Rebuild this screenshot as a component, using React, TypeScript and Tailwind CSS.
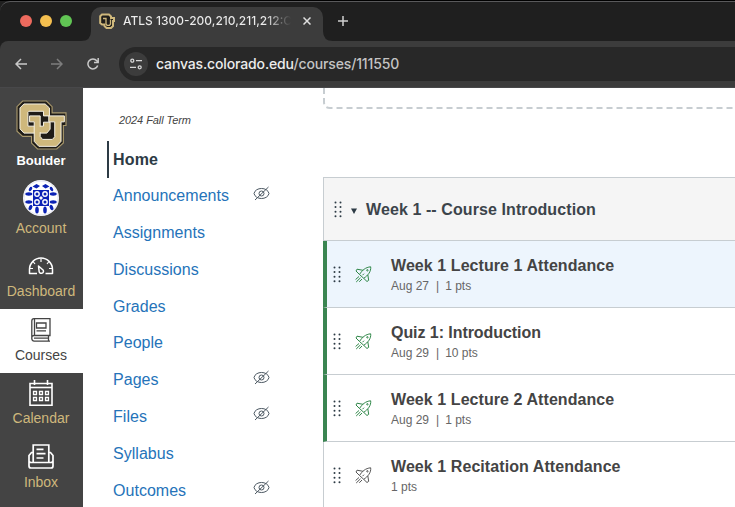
import React from 'react';

const sans = "font-['Liberation_Sans',Arial,sans-serif]";

function CuLogo({ className }: { className: string }) {
  return (
    <svg className={className} viewBox="46 40 154 151" fill="none">
      <path
        d="M66 43H138L155 60V79H197V117H189V170L169 188H111L93 170V150H66L49 134V60Z"
        fill="#1f1c18"
        stroke="#a8986c"
        strokeWidth="3.500"
      />
      <g fill="#cfb87c" stroke="#f7f3e6" strokeWidth="3">
        <path d="M70 52H134L147 64V88H129V74H85L82 77V119H129V107H149V128L139 140H70L58 127V64Z" />
        <path d="M87 88H119V150L126 159H156L163 151V106H145V88H192V106H182V165L168 180H115L101 165V106H87Z" />
      </g>
      <path d="M104 121V137H122V121Z" fill="#cfb87c" />
    </svg>
  );
}

function Avatar() {
  return (
    <svg className="block size-9" viewBox="0 0 36 36">
      <circle cx="18" cy="18" r="18" fill="#fff" />
      <circle cx="18" cy="18" r="17" fill="none" stroke="#c9cdea" strokeWidth=".5" />
      <g fill="#0b22b5">
        <path d="M10 10H26V26H10Z" />
        <path d="M9.500 6.500L13.500 4L17 6L13.500 8.500Z M19 6L22.500 4L26.500 6.500L22.500 8.500Z" />
        {[14, 22].map((v) => (
          <g key={v}>
            <ellipse cx={v} cy="30" rx="1.800" ry="3.500" />
            <ellipse cx="5.800" cy={v} rx="3.500" ry="1.700" />
            <ellipse cx="30.200" cy={v} rx="3.500" ry="1.700" />
          </g>
        ))}
        <ellipse cx="7.500" cy="27.500" rx="1.700" ry="2.800" transform="rotate(25 7.500 27.500)" />
        <ellipse cx="28.500" cy="27.500" rx="1.700" ry="2.800" transform="rotate(-25 28.500 27.500)" />
        <ellipse cx="7.500" cy="9" rx="1.500" ry="2.300" transform="rotate(35 7.500 9)" />
        <ellipse cx="28.500" cy="9" rx="1.500" ry="2.300" transform="rotate(-35 28.500 9)" />
      </g>
      <g fill="#0b22b5" stroke="#fff" strokeWidth="1.400">
        <circle cx="14" cy="14" r="2.200" />
        <circle cx="22" cy="14" r="2.200" />
        <circle cx="14" cy="22" r="2.200" />
        <circle cx="22" cy="22" r="2.200" />
      </g>
      <path d="M18 16L20 18L18 20L16 18Z" fill="#fff" />
    </svg>
  );
}

function DashboardIcon() {
  return (
    <svg className="block h-[18px] w-[26px]" viewBox="0 0 26 18" fill="none" stroke="#fff" strokeWidth="1.500">
      <path d="M9 16.500H1.500V12.500A11.500 11.500 0 0 1 24.500 12.500V16.500H17.500" strokeLinejoin="round" />
      <path d="M13 1.500V5M5 4.500L7 7M21 4.500L19 7M2 11.500H5M21 11.500H24" strokeWidth="1.200" />
      <path d="M10.500 9L15.300 13.200A2.200 2.200 0 1 1 11.200 15Z" strokeLinejoin="round" />
    </svg>
  );
}

function CoursesIcon() {
  return (
    <svg className="block h-6 w-5" viewBox="0 0 20 24" fill="none" stroke="#444" strokeWidth="1.300">
      <path d="M.8 21V3Q.8.700 3 .700H19V17.500H3.200Q.8 17.500.8 20.300T3.200 23.200H19" />
      <path d="M3.500 1V17.500M5.500 5H15V10H5.500ZM5.500 12.800H15M3 20.200H17.500M17.500 17.500V23" />
    </svg>
  );
}

function CalendarIcon() {
  return (
    <svg className="block h-[26px] w-6" viewBox="0 0 24 26" fill="none" stroke="#fff" strokeWidth="1.600">
      <path d="M1 3.500H23V25.200H1ZM5.500 0V5M18.500 0V5" />
      <path d="M1 7.500H23" strokeWidth="1.600" />
      <path d="M4.500 11.500H7.500V14.500H4.500ZM10.500 11.500H13.500V14.500H10.500ZM16.500 11.500H19.500V14.500H16.500ZM4.500 17.500H7.500V20.500H4.500ZM10.500 17.500H13.500V20.500H10.500ZM16.500 17.500H19.500V20.500H16.500Z" strokeWidth="1.300" />
    </svg>
  );
}

function InboxIcon() {
  return (
    <svg className="block h-[25px] w-[26px]" viewBox="0 0 26 25" fill="none" stroke="#fff" strokeWidth="1.700">
      <path d="M5.200 18V1H20.800V18" />
      <path d="M8.500 5.300H15.500M8.500 9.700H17.500M8.500 14H15.500" />
      <path d="M5 8.500H3.500L1 11.500V22Q1 24 3 24H23Q25 24 25 22V11.500L22.500 8.500H21M1 16.500Q1 18.500 3 18.500H23Q25 18.500 25 16.500" />
    </svg>
  );
}

function HiddenIcon() {
  return (
    <svg className="mr-[53px] block h-[15px] w-[17px] shrink-0 -translate-y-[3px]" viewBox="0 0 17 15" fill="none" stroke="#4d5963" strokeWidth="1">
      <path d="M1 7.500C2.500.800 14.500.800 16 7.500C14.500 14.200 2.500 14.200 1 7.500Z" />
      <circle cx="8.500" cy="7.500" r="2.500" />
      <path d="M2 14L15.500 1" />
    </svg>
  );
}

function Rocket({ className }: { className: string }) {
  return (
    <svg className={`block size-[17px] ${className}`} viewBox="0 0 17 17" fill="none" stroke="currentColor" strokeWidth="1" strokeLinejoin="round">
      <path d="M4.500 8.500C7 4.500 10.500 1.200 15.700 .8C16.200 5.500 13 9.500 8.700 12.300Z" />
      <path d="M8 4.300L2 3.200L1 5L4.500 8.500M12.800 8.800L13.700 14.300L12 15.500L8.700 12.300" />
      <circle cx="12.400" cy="4.300" r=".7" />
      <path d="M4 10.500L.6 13.500M5.500 11.800L1.200 16M7 13L4.300 15.800" />
      <path d="M7.500 9.200L9 7.700" />
    </svg>
  );
}

function Grip() {
  return (
    <svg className="block h-[17px] w-2 shrink-0" viewBox="0 0 8 17" fill="#2d3b45">
      {[1.5, 6.1, 10.7, 15.3].map((y) => (
        <g key={y}>
          <circle cx="1.500" cy={y} r="1" />
          <circle cx="6.500" cy={y} r="1" />
        </g>
      ))}
    </svg>
  );
}

function Browser() {
  return (
    <header className="h-[88px] shrink-0 bg-[#1f1f1f] font-[Inter,sans-serif]">
      <div className="h-px bg-black" />
      <div className="flex h-10 rounded-tl-[10px] border-t border-[#59595b]">
        <div className="flex w-[91px] gap-2 pl-5 pt-[13px]">
          <i className="size-3 rounded-full bg-[#ed6a5e]" />
          <i className="size-3 rounded-full bg-[#f4bf4f]" />
          <i className="size-3 rounded-full bg-[#61c554]" />
        </div>
        <div className="relative mt-[5px] flex h-[34px] w-[232px] items-center rounded-t-[10px] bg-[#3c3c3c] pb-[6px] pl-2">
          <svg className="absolute bottom-0 -left-[10px] size-[10px]" viewBox="0 0 10 10"><path d="M10 0V10H0Q10 10 10 0" fill="#3c3c3c" /></svg>
          <svg className="absolute bottom-0 -right-[10px] size-[10px]" viewBox="0 0 10 10"><path d="M0 0V10H10Q0 10 0 0" fill="#3c3c3c" /></svg>
          <svg className="size-4" viewBox="0 0 16 16" fill="none">
            <path d="M3 1.500H10L12 3.500V5H15V8H14V13L12 15H7.500L5.500 13V11.500H3L1.200 10V3.200Z" stroke="#cfb87c" strokeWidth="2" fill="#201e1a" />
            <path d="M4 5.500H7V11L8 12.300H10.500L11.500 11V6.500" stroke="#cfb87c" strokeWidth="1.300" />
          </svg>
          <span className="ml-2 w-[168px] overflow-hidden whitespace-nowrap bg-gradient-to-r from-[#ececec] from-85% to-[#3c3c3c] bg-clip-text text-[12px] font-medium leading-4 text-transparent">
            ATLS 1300-200,210,211,212:C
          </span>
          <svg className="ml-3 size-2" viewBox="0 0 8 8" stroke="#dedede" strokeWidth="1.500"><path d="M.5.5L7.500 7.500M7.500.5L.5 7.500" /></svg>
        </div>
        <svg className="ml-[15px] mt-[14px] size-[10px]" viewBox="0 0 10 10" stroke="#d0d0d0" strokeWidth="1.500"><path d="M5 0V10M0 5H10" /></svg>
      </div>
      <div className="flex h-[47px] items-center rounded-tl-[8px] border-b border-[#48484a] bg-[#3c3c3c]">
        <svg className="ml-[15px] size-3" viewBox="0 0 12 12" fill="none" stroke="#c9c9c9" strokeWidth="1.500"><path d="M12 6H1M6 1L1 6L6 11" /></svg>
        <svg className="ml-6 size-3" viewBox="0 0 12 12" fill="none" stroke="#7d7d7d" strokeWidth="1.500"><path d="M0 6H11M6 1L11 6L6 11" /></svg>
        <svg className="ml-6 size-3" viewBox="0 0 12 12" fill="none" stroke="#c9c9c9" strokeWidth="1.500"><path d="M10.700 7.500A5 5 0 1 1 9.800 2.700L11.200 4.200M11.200 0V4.400H7" /></svg>
        <div className="ml-5 flex h-[34px] flex-1 items-center rounded-l-full bg-[#282828] pl-[5px]">
          <span className="flex size-6 items-center justify-center rounded-full bg-[#3c3c3c]">
            <svg className="size-3" viewBox="0 0 12 12" fill="none" stroke="#d6d6d6" strokeWidth="1.300"><circle cx="2.300" cy="2.700" r="1.500" /><circle cx="9.700" cy="9.300" r="1.500" /><path d="M6 2.700H12M0 9.300H6" /></svg>
          </span>
          <span className="ml-2 whitespace-nowrap text-[14px] font-medium leading-5 tracking-[-0.14px] text-[#c4c4c4]"><span className="text-[#ececec]">canvas.colorado.edu</span>/courses/111550</span>
        </div>
      </div>
    </header>
  );
}

function GlobalNav() {
  const label = 'text-[14px] leading-4 text-[#cfb87c]';
  return (
    <nav className="flex w-[83px] shrink-0 flex-col items-center bg-[#444]">
      <CuLogo className="mt-3 h-[50px] w-[51px] shrink-0" />
      <b className="mt-[3px] pr-px text-[13px] leading-4 text-white">Boulder</b>
      <div className="mt-[11px] flex h-14 shrink-0 flex-col items-center justify-between pr-px"><Avatar /><span className={label}>Account</span></div>
      <div className="mt-[21px] flex h-[42px] shrink-0 flex-col items-center justify-between pr-px"><DashboardIcon /><span className={label}>Dashboard</span></div>
      <div className="mt-[10px] flex h-16 w-full shrink-0 flex-col items-center justify-between bg-white pb-[10px] pr-px pt-[9px]"><CoursesIcon /><span className="text-[14px] leading-4 text-[#444]">Courses</span></div>
      <div className="mt-[7px] flex h-[46px] shrink-0 flex-col items-center justify-between pr-px"><CalendarIcon /><span className={label}>Calendar</span></div>
      <div className="mt-[18px] flex h-[46px] shrink-0 flex-col items-center justify-between pr-px"><InboxIcon /><span className={label}>Inbox</span></div>
    </nav>
  );
}

const links: [string, boolean][] = [
  ['Home', false], ['Announcements', true], ['Assignments', false], ['Discussions', false], ['Grades', false],
  ['People', false], ['Pages', true], ['Files', true], ['Syllabus', false], ['Outcomes', true],
];

function CourseNav() {
  return (
    <nav className="w-[240px] shrink-0 pl-6">
      <p className="pl-3 pt-[25px] text-[11px] italic leading-[14px] tracking-[-0.08px] text-[#444]">2024 Fall Term</p>
      <ul className="mt-[14px]">
        {links.map(([name, hidden], i) => (
          <li key={name} className={`flex h-[36.800px] items-center justify-between ${i === 0 ? 'border-l-2 border-[#2d3b45] pl-1 pt-[2px] font-bold tracking-[0.15px] text-[#2d3b45]' : 'pl-[6px] tracking-[0.03px] text-[#2573b9]'}`}>
            <span className="text-[16px] leading-5">{name}</span>
            {hidden && <HiddenIcon />}
          </li>
        ))}
      </ul>
    </nav>
  );
}

const rows: [string, string, string, boolean][] = [
  ['Week 1 Lecture 1 Attendance', 'Aug 27', '1 pts', true],
  ['Quiz 1: Introduction', 'Aug 29', '10 pts', true],
  ['Week 1 Lecture 2 Attendance', 'Aug 29', '1 pts', true],
  ['Week 1 Recitation Attendance', '', '1 pts', false],
];

function Modules() {
  return (
    <main className="flex-1 overflow-hidden">
      <svg className="block h-[21px] w-[412px]" viewBox="0 0 412 21" fill="none" stroke="#c7cdd1" strokeWidth="2">
        <path d="M1 0V14Q1 20 7 20H412" strokeDasharray="6 4" />
      </svg>
      <section className="mt-[68px]">
        <div className="flex h-16 items-center border border-r-0 border-[#c7cdd1] bg-[#f5f5f5] pl-[10px]">
          <Grip />
          <svg className="ml-[9px] mt-[3px] size-[6px]" viewBox="0 0 6 6" fill="#2d3b45"><path d="M0 .5H6L3 6Z" /></svg>
          <h2 className="ml-[9px] pt-[2px] text-[16px] font-bold leading-5 tracking-[0.09px] text-[#3c444b]">Week 1 -- Course Introduction</h2>
        </div>
        {rows.map(([title, date, pts, done], i) => (
          <div key={title} className={`flex h-[67px] items-center border-b border-b-[#c7cdd1] ${done ? 'border-l-4 border-l-[#3a8551] pl-[6px]' : 'border-l border-l-[#c7cdd1] pl-[9px]'} ${i === 0 ? 'bg-[#edf5fd]' : 'bg-white'}`}>
            <Grip />
            <Rocket className={`ml-[14px] ${done ? 'text-[#2f8748]' : 'text-[#555]'}`} />
            <div className="ml-[19px] pt-[2px]">
              <h3 className={`text-[16px] font-bold leading-5 text-[#444] ${i === 1 ? 'tracking-[-0.06px]' : 'tracking-[0.07px]'}`}>{title}</h3>
              <p className="mt-[2px] flex whitespace-pre text-[12px] leading-4 text-[#666]">
                {date && <><span>{date}</span><span className="ml-[7px] mr-[6px]">|</span></>}<span>{pts}</span>
              </p>
            </div>
          </div>
        ))}
      </section>
    </main>
  );
}

export default function App() {
  return (
    <div className={`flex h-[507px] w-[735px] flex-col overflow-hidden bg-white ${sans}`}>
      <Browser />
      <div className="flex min-h-0 flex-1 overflow-hidden">
        <GlobalNav />
        <CourseNav />
        <Modules />
      </div>
    </div>
  );
}
